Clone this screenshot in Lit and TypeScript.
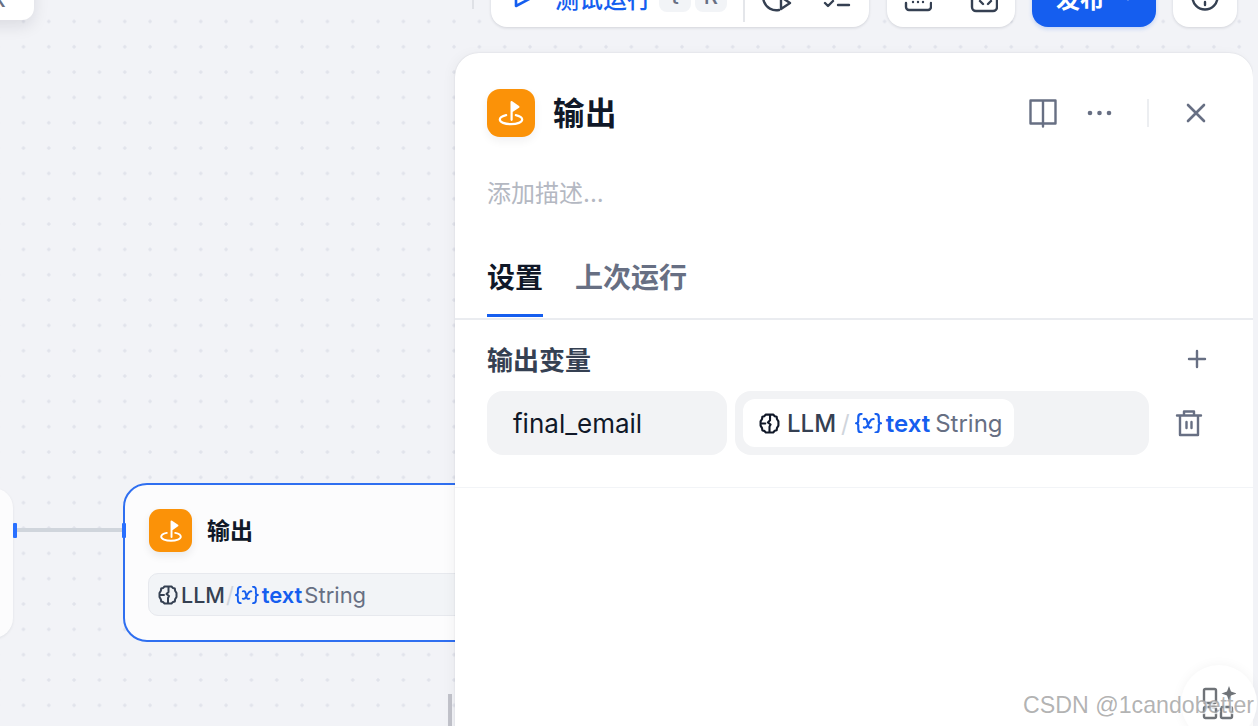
import { LitElement, html, css, svg } from "lit";
import { customElement } from "lit/decorators.js";

const flag = (size: number) => html`<svg width=${size} height=${size} viewBox="0 0 24 24" fill="none" stroke="#fff" stroke-width="1.1" stroke-linecap="round" stroke-linejoin="round">
  <path d="M12.300 15.400V6.600l3.400 2.300-3.400 2.300" fill="#fff"/>
  <path d="M9.600 13.100c-1.900.4-3.200 1.200-3.200 2.200 0 1.300 2.500 2.300 5.600 2.300s5.600-1 5.600-2.300c0-1-1.300-1.800-3.200-2.200"/>
</svg>`;

const brain = (size: number, color: string) => html`<svg width=${size} height=${size} viewBox="0 0 20 20" fill="none" stroke=${color} stroke-width="2" stroke-linejoin="round" stroke-linecap="round">
  <path d="M6.500 1.500h7l1.500 1.600 1.800.4.300 2.200 1.400 2.300v4l-1.400 2.300-.3 2.200-1.800.4-1.500 1.600h-7L5 17l-1.800-.4-.3-2.200L1.500 12V8l1.400-2.300.3-2.200L5 3.100z"/>
  <path d="M10.500 2v5L8.500 9l2.500 2-1 2v5M2.500 10H6"/>
</svg>`;

const varIcon = (size: number) => html`<svg width=${size * 1.32} height=${size} viewBox="0 0 29 22" fill="none" stroke="#155eef" stroke-width="2.300" stroke-linecap="round" stroke-linejoin="round">
  <path d="M7 1C4 1 3.500 2.500 3.500 4.500v4c0 1.300-.8 2.500-2.500 2.500 1.700 0 2.500 1.200 2.500 2.500v4c0 2 .5 3.500 3.500 3.500"/>
  <path d="M22 1c3 0 3.500 1.500 3.500 3.500v4c0 1.300.8 2.500 2.500 2.500-1.700 0-2.500 1.200-2.500 2.500v4c0 2-.5 3.500-3.500 3.500"/>
  <path d="M9.500 6.500c1.800-.5 2.900 0 3.400 2l1.400 5.500c.5 1.700 1.500 2.100 3.200 1.500M20 6.500c-1.800-.3-3 .6-4.200 2.800L13.500 13.500c-1 2-2.200 2.700-4 2"/>
</svg>`;

@customElement("app-root")
export class AppRoot extends LitElement {
  static styles = css`
    :host {
      display: block;
      width: 1258px;
      height: 726px;
      font-family: Inter, "Noto Sans CJK SC", "Noto Sans", sans-serif;
    }
    .canvas {
      position: relative;
      width: 1258px;
      height: 726px;
      overflow: hidden;
      background-color: #f2f3f7;
      background-image: radial-gradient(circle, #e1e3eb 1.4px, transparent 1.9px);
      background-size: 25.33px 25.33px;
      background-position: 10.8px 8.8px;
    }
    .corner-card {
      position: absolute;
      left: -60px;
      top: -40px;
      width: 94px;
      height: 60px;
      background: #fff;
      border-radius: 12px;
      box-shadow: 0 6px 16px rgba(16, 24, 40, 0.1);
    }
    .corner-card span {
      position: absolute;
      left: 54px;
      top: 34px;
      font-size: 16px;
      line-height: 14px;
      font-weight: 700;
      color: #676f83;
    }
    .tick {
      position: absolute;
      left: 472px;
      top: 0;
      width: 2px;
      height: 9px;
      background: #dfe1e6;
    }
    .toolbar {
      position: absolute;
      left: 491px;
      top: -33px;
      display: flex;
      align-items: stretch;
      height: 60px;
    }
    .tool {
      display: flex;
      align-items: center;
      background: #fff;
      border-radius: 16px;
      box-shadow: 0 1px 3px rgba(16, 24, 40, 0.14);
    }
    .run {
      width: 378px;
      padding-left: 22px;
      box-sizing: border-box;
      color: #155eef;
      font-size: 24px;
      font-weight: 500;
    }
    .run-label {
      margin-left: 20px;
      width: 104px;
      white-space: nowrap;
    }
    .kbd {
      width: 32px;
      height: 32px;
      margin-right: 4px;
      border-radius: 8px;
      background: #f2f4f7;
      color: #676f83;
      font-size: 22px;
      display: flex;
      align-items: center;
      justify-content: center;
      font-weight: 500;
    }
    .kbd-row {
      display: flex;
      align-items: center;
      margin-top: -2px;
    }
    .sep {
      width: 2px;
      height: 26px;
      background: #e4e6ea;
      margin-left: 12px;
      margin-top: 24px;
    }
    .run-icons {
      display: flex;
      align-items: center;
      gap: 31px;
      margin-left: 15px;
    }
    .icons2 {
      width: 128px;
      margin-left: 18px;
      justify-content: center;
      gap: 38px;
    }
    .publish {
      width: 124px;
      margin-left: 17px;
      background: #155eef;
      color: #fff;
      font-size: 24px;
      font-weight: 600;
      justify-content: flex-start;
      padding-left: 24px;
      box-sizing: border-box;
      box-shadow: 0 2px 4px rgba(21, 94, 239, 0.2);
      gap: 14px;
    }
    .help {
      width: 64px;
      margin-left: 17px;
      justify-content: center;
    }
    .left-node {
      position: absolute;
      left: -120px;
      top: 488px;
      width: 133px;
      height: 150px;
      border-radius: 20px;
      background: #fcfcfd;
      box-shadow: 0 1px 3px rgba(16, 24, 40, 0.08);
    }
    .wire {
      position: absolute;
      left: 16px;
      top: 528px;
      width: 108px;
      height: 4px;
      background: #d0d5dc;
    }
    .handle {
      position: absolute;
      top: 523px;
      width: 4px;
      height: 15px;
      border-radius: 1px;
      background: #2970ff;
    }
    .node {
      position: absolute;
      left: 123px;
      top: 483px;
      width: 400px;
      height: 159px;
      box-sizing: border-box;
      border: 2px solid #2f6ff0;
      border-radius: 24px;
      background: #fcfcfd;
      padding: 24px;
      display: flex;
      flex-direction: column;
    }
    .node-head {
      display: flex;
      align-items: center;
      gap: 15px;
      font-size: 23px;
      font-weight: 700;
      color: #101828;
      height: 43px;
    }
    .node-head .label { margin-top: -4px; }
    .node-icon {
      width: 43px;
      height: 43px;
      border-radius: 11px;
      background: #fb9208;
      display: flex;
      align-items: center;
      justify-content: center;
      box-shadow: 0 4px 8px rgba(16, 24, 40, 0.08);
      flex: none;
    }
    .node-pill {
      margin-top: 21px;
      margin-left: -1px;
      height: 44px;
      box-sizing: border-box;
      border: 1px solid #e7e9ee;
      border-radius: 10px;
      background: #f2f4f7;
      display: flex;
      align-items: center;
      padding: 1px 0 0 9px;
      font-size: 22px;
      color: #354052;
      font-weight: 500;
      white-space: nowrap;
    }
    .node-pill .llm { margin-left: 3px; font-size: 21.5px; }
    .slash { color: #d0d5dc; font-weight: 400; }
    .node-pill .slash { margin: 0 1px 0 1px; }
    .node-pill .vname { margin-left: 3px; }
    .vname { color: #155eef; font-weight: 600; }
    .vtype { color: #676f83; font-weight: 400; }
    .node-pill .vtype { margin-left: 2px; }
    .scrollbar {
      position: absolute;
      left: 448px;
      top: 694px;
      width: 4px;
      height: 32px;
      background: #c2c3cb;
    }
    .panel {
      position: absolute;
      left: 455px;
      top: 53px;
      width: 798px;
      height: 700px;
      box-sizing: border-box;
      background: #fff;
      border-radius: 24px 24px 0 0;
      box-shadow: 0 0 2px rgba(16, 24, 40, 0.12), -4px 0 12px rgba(16, 24, 40, 0.03);
      display: flex;
      flex-direction: column;
    }
    .head {
      display: flex;
      align-items: center;
      padding: 36px 32px 0;
      height: 48px;
    }
    .head-icon {
      width: 48px;
      height: 48px;
      border-radius: 13px;
      background: #fb9208;
      display: flex;
      align-items: center;
      justify-content: center;
      box-shadow: 0 4px 10px rgba(16, 24, 40, 0.06);
      flex: none;
    }
    .title {
      margin: -4px 0 0 18px;
      font-size: 31.5px;
      font-weight: 700;
      color: #101828;
      flex: 1;
      letter-spacing: 0.5px;
    }
    .head-actions {
      display: flex;
      align-items: center;
      margin-right: 14px;
    }
    .dots { margin-left: 30px; }
    .v-sep {
      width: 2px;
      height: 28px;
      background: #eceef1;
      margin: 0 36px 0 35px;
    }
    .desc {
      margin: 43px 32px 0;
      font-size: 24px;
      line-height: 28px;
      color: #b4b8c2;
    }
    .tabs {
      margin-top: 50px;
      padding: 0 32px;
      display: flex;
      gap: 32px;
      height: 60px;
      border-bottom: 2px solid #eaecf0;
    }
    .tab {
      font-size: 28px;
      line-height: 40px;
      font-weight: 600;
      color: #676f83;
      position: relative;
      white-space: nowrap;
    }
    .tab.active { color: #101828; font-weight: 700; }
    .tab.active::after {
      content: "";
      position: absolute;
      left: 0;
      right: 0;
      bottom: 1px;
      height: 3px;
      background: #155eef;
    }
    .section-head {
      display: flex;
      align-items: center;
      justify-content: space-between;
      margin-top: 21px;
      padding: 0 44px 0 32px;
      height: 36px;
      font-size: 26px;
      font-weight: 600;
      color: #354052;
    }
    .section-head span { margin-top: -1px; }
    .row {
      display: flex;
      align-items: center;
      margin-top: 14px;
      padding: 0 32px 32px;
      border-bottom: 1px solid #f2f4f7;
    }
    .name {
      width: 240px;
      height: 64px;
      box-sizing: border-box;
      padding-left: 26px;
      background: #f2f3f5;
      border-radius: 16px;
      display: flex;
      align-items: center;
      font-size: 26px;
      color: #101828;
    }
    .value {
      width: 414px;
      height: 64px;
      margin-left: 8px;
      box-sizing: border-box;
      padding: 8px;
      background: #f2f3f5;
      border-radius: 16px;
      display: flex;
    }
    .value-pill {
      width: 271px;
      height: 48px;
      box-sizing: border-box;
      padding-left: 16px;
      background: #fff;
      border-radius: 12px;
      display: flex;
      align-items: center;
      font-size: 24px;
      color: #354052;
      font-weight: 500;
      white-space: nowrap;
    }
    .value-pill .llm { margin-left: 7px; }
    .value-pill .slash { margin: 0 5px 0 5px; }
    .value-pill .vname { margin-left: 4px; }
    .value-pill .vtype { margin-left: 5px; }
    .trash {
      margin-left: 26px;
      display: flex;
    }
    .fab {
      position: absolute;
      left: 1181px;
      top: 665px;
      width: 76px;
      height: 76px;
      border-radius: 50%;
      background: #fff;
      box-shadow: 0 0 12px rgba(16, 24, 40, 0.05);
      display: flex;
      align-items: center;
      justify-content: center;
    }
    .edge {
      position: absolute;
      left: 1253px;
      top: 53px;
      width: 5px;
      height: 673px;
      background: #f2f3f7;
    }
    .mark {
      position: absolute;
      left: 1023px;
      top: 690px;
      font-family: "Liberation Sans", Arial, sans-serif;
      font-size: 23.2px;
      line-height: 30px;
      color: rgba(150, 150, 150, 0.72);
      text-shadow: 1px 1px 1px rgba(255, 255, 255, 0.9);
      white-space: nowrap;
    }
  `;

  render() {
    const ic = (w: number, h: number, body: unknown, color = "#354052", sw = 2.4) =>
      html`<svg width=${w} height=${h} viewBox="0 0 ${w} ${h}" fill="none" stroke=${color} stroke-width=${sw} stroke-linecap="round" stroke-linejoin="round">${body}</svg>`;
    return html`
      <div class="canvas">
        <div class="corner-card"><span>K</span></div>
        <div class="tick"></div>

        <div class="toolbar">
          <div class="tool run">
            ${ic(22, 22, svg`<path d="M3 2.500 20 11 3 20z"/>`, "#155eef", 2.6)}
            <span class="run-label">测试运行</span>
            <div class="kbd-row"><span class="kbd">t</span><span class="kbd">R</span></div>
            <span class="sep"></span>
            <div class="run-icons">
              ${ic(32, 32, svg`<path d="M19 29a13 13 0 1 1 8-20"/><path d="M21 16l9 6-9 6z"/>`)}
              ${ic(28, 32, svg`<path d="M2 22l3 3 5-5"/><path d="M15 24h11"/>`)}
            </div>
          </div>
          <div class="tool icons2">
            ${ic(28, 32, svg`<path d="M2 22v4a3 3 0 0 0 3 3h19a3 3 0 0 0 3-3v-4"/><path d="M9 21h0M14 21h0M19 21h0"/>`)}
            ${ic(28, 32, svg`<rect x="2" y="10" width="25" height="20" rx="4"/><path d="M10 20l3 3M18 23l3-3"/>`)}
          </div>
          <div class="tool publish">
            <span>发布</span>
            ${ic(20, 20, svg`<path d="M5 7l5 5 5-5"/>`, "#fff", 2.6)}
          </div>
          <div class="tool help">
            ${ic(28, 32, svg`<circle cx="14" cy="16" r="12.500"/><path d="M14 21v3"/>`)}
          </div>
        </div>

        <div class="left-node"></div>
        <div class="wire"></div>
        <div class="handle" style="left: 13px"></div>
        <div class="node">
          <div class="node-head"><span class="node-icon">${flag(42)}</span><span class="label">输出</span></div>
          <div class="node-pill">
            ${brain(20, "#354052")}<span class="llm">LLM</span><span class="slash">/</span>${varIcon(18)}<span class="vname">text</span><span class="vtype">String</span>
          </div>
        </div>
        <div class="handle" style="left: 122px"></div>
        <div class="scrollbar"></div>

        <div class="panel">
          <div class="head">
            <span class="head-icon">${flag(48)}</span>
            <span class="title">输出</span>
            <div class="head-actions">
              ${ic(28, 30, svg`<path d="M14 2.500H1.500v23H14m0-23h12.500v23H14m0-23v26"/>`, "#676f83", 2.4)}
              <svg class="dots" width="25" height="6" viewBox="0 0 25 6" fill="#676f83"><circle cx="3" cy="3" r="2.300"/><circle cx="12.500" cy="3" r="2.300"/><circle cx="22" cy="3" r="2.300"/></svg>
              <span class="v-sep"></span>
              ${ic(22, 22, svg`<path d="M3 3l16 16M19 3 3 19"/>`, "#676f83", 2.6)}
            </div>
          </div>
          <div class="desc">添加描述...</div>
          <div class="tabs">
            <span class="tab active">设置</span>
            <span class="tab">上次运行</span>
          </div>
          <div class="section-head">
            <span>输出变量</span>
            ${ic(24, 24, svg`<path d="M12 4v16M4 12h16"/>`, "#676f83", 2.4)}
          </div>
          <div class="row">
            <div class="name">final_email</div>
            <div class="value">
              <div class="value-pill">
                ${brain(21, "#101828")}<span class="llm">LLM</span><span class="slash">/</span>${varIcon(20.5)}<span class="vname">text</span><span class="vtype">String</span>
              </div>
            </div>
            <span class="trash">
              ${ic(28, 28, svg`<path d="M2 6.500h24M9 6.500V2.500h10v4M5 6.500V26h18V6.500M11.500 13v6M16.500 13v6"/>`, "#676f83", 2.4)}
            </span>
          </div>
        </div>
        <div class="edge"></div>
        <div class="fab">
          ${ic(34, 34, svg`<rect x="2" y="3" width="12" height="14" rx="1.500"/><rect x="2" y="21" width="12" height="11" rx="1.500"/><rect x="19" y="21" width="11" height="11" rx="1.500"/><path d="M27 0l2 5.500 5.500 2-5.500 2-2 5.500-2-5.500-5.500-2 5.500-2z" fill="#6f7378" stroke="none"/>`, "#6f7378", 2.4)}
        </div>
        <div class="mark">CSDN @1candobetter</div>
      </div>
    `;
  }
}
